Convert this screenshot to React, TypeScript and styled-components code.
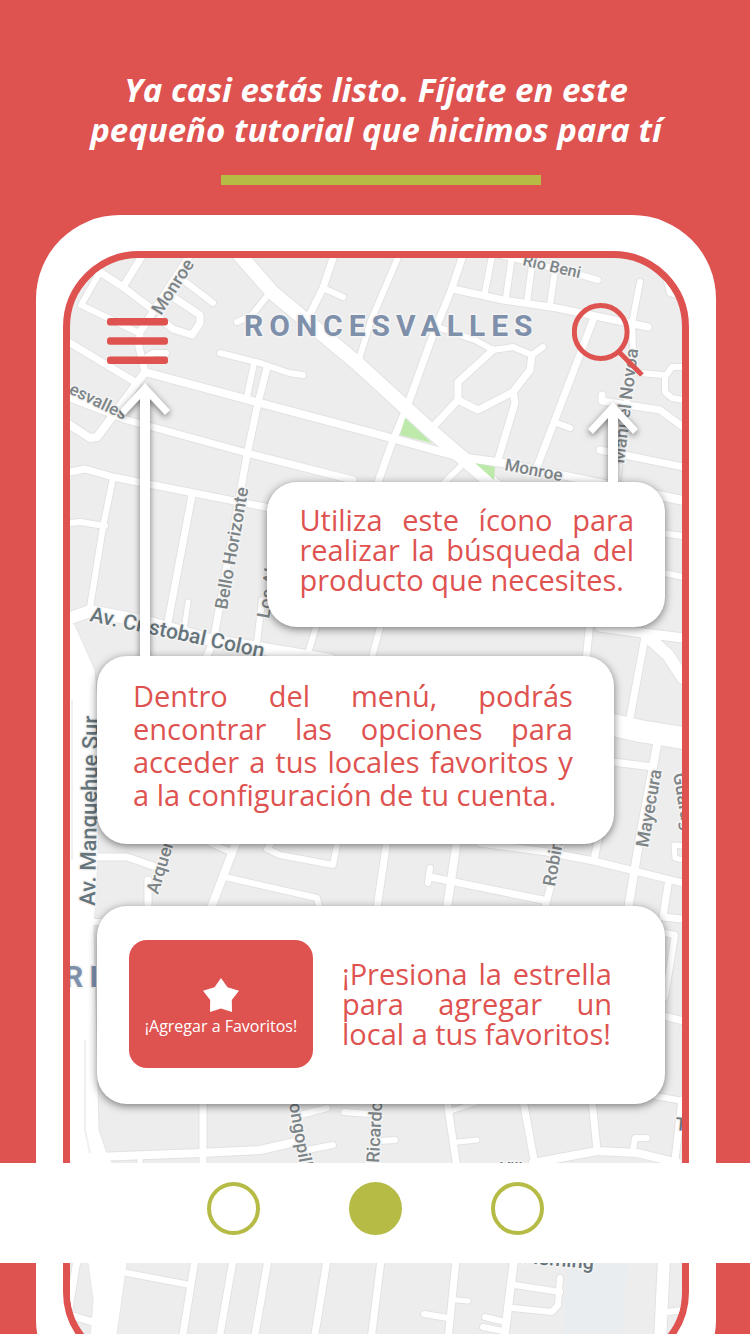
import React from "react";
import styled, { createGlobalStyle } from "styled-components";

const red = "#de5250";
const olive = "#b5bb45";
const sans = '"Open Sans", "Noto Sans", sans-serif';

const GlobalStyle = createGlobalStyle`
  *, *::before, *::after { box-sizing: border-box; }
  body { margin: 0; background: ${red}; font-family: ${sans}; }
  button { font-family: inherit; border: 0; padding: 0; background: none; cursor: pointer; }
`;

const Page = styled.main`
  position: relative;
  height: 100vh;
  overflow: hidden;
  display: flex;
  flex-direction: column;
  background: ${red};
`;

const Header = styled.header`
  flex: none;
  display: flex;
  flex-direction: column;
  align-items: center;
  padding: 70px 38px 30px 40px;
`;

const Title = styled.h1`
  margin: 0;
  max-width: 640px;
  color: #fff;
  font-size: 33px;
  font-style: italic;
  font-weight: 700;
  line-height: 40px;
  text-align: center;
`;

const Rule = styled.hr`
  width: 320px;
  height: 10px;
  margin: 25px 0 0 10px;
  border: 0;
  background: ${olive};
`;

const Phone = styled.section`
  flex: none;
  margin: 0 34px 0 36px;
  padding: 36px 27px;
  border-radius: 84px;
  background: #fff;
`;

const Screen = styled.div`
  position: relative;
  overflow: hidden;
  padding: 45px 17px 257px 27px;
  border: 7px solid ${red};
  border-radius: 76px;
  background: #ededed;
`;

const MapCanvas = styled.svg`
  position: absolute;
  top: 0;
  left: 0;
  width: 100%;
  font-family: Roboto, sans-serif;
`;

const TopBar = styled.div`
  position: relative;
  display: flex;
  justify-content: space-between;
  align-items: center;
  margin-bottom: 106px;
  padding: 0 21px 0 10px;
`;

const IconButton = styled.button`
  display: flex;
  svg { display: block; }
`;

const Tips = styled.div`
  position: relative;
  display: flex;
  flex-direction: column;
`;

const Card = styled.article<{ $width: string; $pad: string; $gap?: number; $right?: boolean }>`
  position: relative;
  display: flex;
  align-items: center;
  gap: 29px;
  width: ${(p) => p.$width};
  margin-top: ${(p) => p.$gap ?? 0}px;
  align-self: ${(p) => (p.$right ? "flex-end" : "flex-start")};
  padding: ${(p) => p.$pad};
  border-radius: 30px;
  background: #fff;
  box-shadow: 0 2px 8px rgba(0, 0, 0, 0.5);
`;

const CardText = styled.p<{ $leading: number }>`
  flex: 1;
  margin: 0;
  color: ${red};
  font-size: 29px;
  line-height: ${(p) => p.$leading}px;
  text-align: justify;
`;

const ArrowSvg = styled.svg<{ $side: "left" | "right"; $inset: number }>`
  position: absolute;
  bottom: 100%;
  ${(p) => p.$side}: ${(p) => p.$inset}px;
  overflow: visible;
  filter: drop-shadow(0 2px 3px rgba(0, 0, 0, 0.5));
  clip-path: inset(-12px -12px 0 -12px);
`;

const FavButton = styled.button`
  flex: none;
  display: flex;
  flex-direction: column;
  align-items: center;
  width: 184px;
  height: 128px;
  padding-top: 38px;
  border-radius: 18px;
  background: ${red};
  color: #fff;
  font-size: 16px;
  line-height: 24px;
  white-space: nowrap;
  svg { display: block; margin-bottom: 2px; }
`;

const Pager = styled.nav`
  position: absolute;
  left: 0;
  right: 0;
  bottom: 71px;
  display: flex;
  justify-content: center;
  align-items: flex-start;
  gap: 89px;
  height: 100px;
  padding-top: 19px;
  background: #fff;
`;

const Dot = styled.button<{ $active?: boolean }>`
  && { border: 4px solid ${olive}; }
  width: 53px;
  height: 53px;
  border-radius: 50%;
  background: ${(p) => (p.$active ? olive : "#fff")};
`;

type Road = [points: string, width?: number];

const roads: Road[] = [
  ["97,270 123,287 152,309"],
  ["142,256 123,287"],
  ["100,272 81,305 137,332", 6],
  ["70,343 135,382"],
  ["192,252 140,332 139,347 145,372"],
  ["183,280 213,303", 6],
  ["173,297 200,315 200,323 192,335 173,329 160,319", 7],
  ["148,356 154,353 166,353", 6],
  ["145,372 260,403 380,435 460,457 503,463 683,500", 8],
  ["145,372 127,397 97,437 90,438 70,425", 8],
  ["70,398 127,420 247,453 353,480", 7],
  ["237,252 273,293 357,363 430,430 500,490", 14],
  ["334,255 323,288 307,320"],
  ["323,288 343,297", 6],
  ["268,295 252,315 237,322", 6],
  ["220,353 260,363 289,373 303,375", 6],
  ["254,363 247,397", 6],
  ["267,368 258,403 247,455 213,643 205,660", 7],
  ["399,255 370,323 358,363", 6],
  ["463,255 452,288 430,343 407,407 393,440 377,485", 7],
  ["453,289 503,300 557,308 648,327"],
  ["492,256 485,292", 6],
  ["512,256 506,297", 6],
  ["532,265 527,302", 6],
  ["555,270 550,305", 6],
  ["500,255 577,274 598,280", 6],
  ["640,282 632,323 633,350 617,482", 6],
  ["593,320 537,467"],
  ["440,328 475,340 493,350 513,347 532,355 543,347", 6],
  ["532,355 530,370 513,392 478,410 458,400 458,382 493,350", 7],
  ["458,400 430,430", 7],
  ["513,392 515,403 498,460", 7],
  ["557,423 570,428", 6],
  ["640,373 663,375", 6],
  ["683,367 672,367 665,377 665,392 672,398 683,400", 6],
  ["602,395 602,401 660,410 683,427", 7],
  ["600,450 683,467", 7],
  ["667,281 670,293 683,297", 6],
  ["460,467 442,485", 6],
  ["70,472 85,469 113,477 270,508"],
  ["113,478 103,527 90,607", 6],
  ["70,523 80,522 105,526", 6],
  ["192,495 168,622"],
  ["188,602 184,630", 5],
  ["262,600 255,660", 6],
  ["70,618 90,611 147,622 210,640 330,660", 12],
  ["318,620 307,657", 6],
  ["382,620 372,657", 6],
  ["660,497 683,502", 6],
  ["660,533 683,536", 6],
  ["660,572 683,577", 6],
  ["590,622 586,660", 7],
  ["600,627 643,633 683,638", 9],
  ["648,637 668,655 683,678", 12],
  ["645,637 630,718", 7],
  ["600,722 640,731 683,738", 22],
  ["657,745 653,767 640,837 628,910", 8],
  ["605,761 653,767", 7],
  ["480,843 547,852 594,861 683,883"],
  ["599,835 594,860", 7],
  ["668,885 663,917 683,919"],
  ["683,846 674,845 675,858 683,860", 5],
  ["237,840 211,908", 8],
  ["210,843 233,853", 6],
  ["225,877 317,898 320,910", 6],
  ["275,838 267,849 280,855 333,865 338,840", 6],
  ["387,840 377,908"],
  ["457,840 447,908", 8],
  ["430,868 428,883", 6],
  ["430,877 543,900", 7],
  ["562,840 545,908", 7],
  ["97,857 127,857 153,866"],
  ["148,880 148,908", 7],
  ["92,922 104,922", 6],
  ["203,1100 203,1165"],
  ["70,1158 200,1153 260,1150 300,1141", 8],
  ["140,1157 140,1168", 5],
  ["307,1150 333,1145", 6],
  ["300,1115 327,1108", 6],
  ["344,1112 370,1114", 6],
  ["379,1141 395,1140", 6],
  ["447,1100 457,1168", 7],
  ["523,1100 534,1160"],
  ["592,1100 597,1150"],
  ["533,1163 597,1151 637,1153 683,1164", 8],
  ["448,1112 475,1103", 5],
  ["458,1142 477,1140", 5],
  ["633,1150 635,1138 647,1138", 6],
  ["655,1096 683,1101", 6],
  ["660,1015 683,1021", 7],
  ["660,932 675,935 665,997", 6],
  ["682,1100 675,1160", 7],
  ["195,1260 182,1340", 7],
  ["233,1260 219,1340", 7],
  ["268,1260 254,1340", 7],
  ["327,1260 314,1340", 7],
  ["381,1260 371,1340", 7],
  ["456,1260 448,1340", 7],
  ["514,1260 504,1340", 8],
  ["664,1260 660,1340", 12],
  ["127,1273 190,1285", 6],
  ["456,1300 468,1301", 5],
  ["424,1314 448,1318", 6],
  ["485,1317 505,1322", 6],
  ["483,1327 503,1331", 6],
  ["515,1285 560,1292", 6],
  ["560,1278 558,1305 552,1312 513,1308", 6],
  ["660,1313 683,1310", 6],
  ["70,1315 96,1323", 7],
  ["77,1260 68,1315", 7],
];

type Label = [text: string, x: number, y: number, angle: number, size?: number, major?: boolean];

const labels: Label[] = [
  ["Monroe", 161, 316, -57, 18],
  ["esvalles", 68, 393, 26, 17],
  ["Río Beni", 522, 265, 13, 16],
  ["Monroe", 504, 470, 11, 17],
  ["Manuel Novoa", 624, 464, -83, 18],
  ["Bello Horizonte", 227, 610, -80, 18],
  ["Los Alpes", 269, 619, -80, 18],
  ["Av. Cristobal Colon", 89, 621, 12, 21, true],
  ["Av. Manquehue Sur", 95, 906, -89, 22, true],
  ["Arquero", 158, 895, -73, 18],
  ["Robinson", 555, 887, -80, 18],
  ["Mayecura", 648, 848, -80, 18],
  ["Guaragua", 673, 774, 80, 18],
  ["ongopilla", 289, 1104, 80, 18],
  ["Ricardo", 379, 1163, -87, 18],
  ["Fleming", 522, 1263, 5, 20, true],
  ["Villa", 500, 1174, 0, 16, true],
  ["T", 675, 1130, 5, 18, true],
];

function StreetMap() {
  return (
    <MapCanvas viewBox="70 258 612 1103" aria-hidden="true">
      <polygon points="568,1255 628,1255 620,1361 562,1361" fill="#e9edf0" />
      <g fill="none" stroke="#e2e2e2" strokeLinecap="round" strokeLinejoin="round">
        {roads.map(([points, width = 7], i) => (
          <polyline key={i} points={points} strokeWidth={width + 2} />
        ))}
      </g>
      <g fill="#fff" stroke="#e6e6e6" strokeWidth="1">
        <polygon points="68,620 75,625 95,670 98,700 98,860 94,930 97,1040 99,1130 108,1156 135,1200 127,1263 113,1363 88,1363 93,1300 88,1263 80,1200 68,1160" />
      </g>
      <path d="M72 700V860M85 1040V1130L91 1158" fill="none" stroke="#f0f0f0" strokeWidth="2" />
      <g fill="none" stroke="#fff" strokeLinecap="round" strokeLinejoin="round">
        {roads.map(([points, width = 7], i) => (
          <polyline key={i} points={points} strokeWidth={width} />
        ))}
      </g>
      <g fill="#bdeaab">
        <polygon points="405,418 432,443 400,435" />
        <polygon points="475,463 495,467 494,480" />
      </g>
      <g stroke="#f4f4f4" strokeWidth="3" strokeLinejoin="round" paintOrder="stroke" fontWeight="500">
        {labels.map(([text, x, y, angle, size = 18, major], i) => (
          <text
            key={i}
            transform={`translate(${x} ${y}) rotate(${angle})`}
            fontSize={size}
            fill={major ? "#66757b" : "#7d8487"}
          >
            {text}
          </text>
        ))}
        <g fill="#7f90ab" fontSize="30" fontWeight="700" letterSpacing="6">
          <text x="244" y="336">RONCESVALLES</text>
          <text x="64" y="987">RI</text>
        </g>
      </g>
    </MapCanvas>
  );
}

function Arrow({ length, side, inset }: { length: number; side: "left" | "right"; inset: number }) {
  return (
    <ArrowSvg $side={side} $inset={inset} width="52" height={length} viewBox={`0 0 52 ${length}`} aria-hidden="true">
      <path d={`M26 0L51 27L46 32L31 16V${length}H21V16L6 32L1 27Z`} fill="#fff" />
    </ArrowSvg>
  );
}

export default function App() {
  return (
    <Page>
      <GlobalStyle />
      <Header>
        <Title>Ya casi estás listo. Fíjate en este pequeño tutorial que hicimos para tí</Title>
        <Rule />
      </Header>
      <Phone>
        <Screen>
          <StreetMap />
          <TopBar>
            <IconButton type="button" aria-label="Menú">
              <svg width="61" height="48" viewBox="0 0 61 48" fill={red}>
                <rect y="2" width="61" height="7.6" rx="3" />
                <rect y="21.2" width="61" height="7.6" rx="3" />
                <rect y="40.4" width="61" height="7.6" rx="3" />
              </svg>
            </IconButton>
            <IconButton type="button" aria-label="Buscar">
              <svg width="72" height="73" viewBox="0 0 72 73" fill="none" stroke={red} strokeWidth="5">
                <circle cx="28.7" cy="29" r="26.4" />
                <path d="M47 49L70 72" />
              </svg>
            </IconButton>
          </TopBar>
          <Tips>
            <Card $width="70%" $pad="23px 31px 32px 32px" $right>
              <Arrow length={80} side="right" inset={26} />
              <CardText $leading={30}>Utiliza este ícono para realizar la búsqueda del producto que necesites.</CardText>
            </Card>
            <Card $width="91%" $pad="23px 41px 33px 36px" $gap={29}>
              <Arrow length={273} side="left" inset={22} />
              <CardText $leading={33}>
                Dentro del menú, podrás encontrar las opciones para acceder a tus locales favoritos y a la
                configuración de tu cuenta.
              </CardText>
            </Card>
            <Card $width="100%" $pad="34px 53px 36px 32px" $gap={62}>
              <FavButton type="button">
                <svg width="36" height="34" viewBox="0 0 36 34" fill="#fff" aria-hidden="true">
                  <path d="M18 0L24.500 9.200L36 12.800L28.800 22L29 34L18 30.600L7 34L7.200 22L0 12.800L11.500 9.200Z" />
                </svg>
                ¡Agregar a Favoritos!
              </FavButton>
              <CardText $leading={30}>¡Presiona la estrella para agregar un local a tus favoritos!</CardText>
            </Card>
          </Tips>
        </Screen>
      </Phone>
      <Pager aria-label="Pasos del tutorial">
        <Dot type="button" aria-label="Paso 1" />
        <Dot type="button" aria-label="Paso 2" aria-current="step" $active />
        <Dot type="button" aria-label="Paso 3" />
      </Pager>
    </Page>
  );
}
